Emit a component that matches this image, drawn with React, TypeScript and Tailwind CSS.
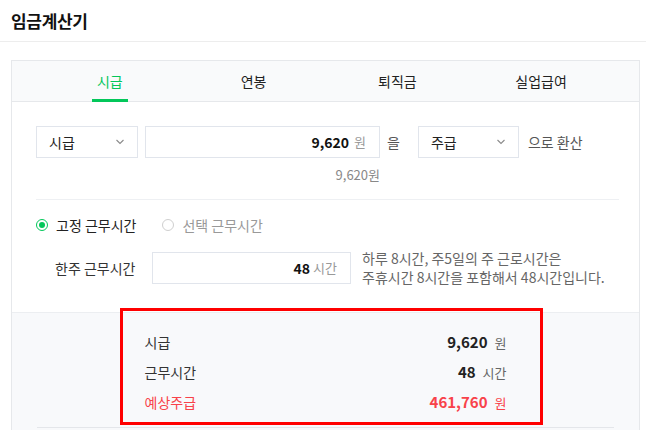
import { ReactNode } from 'react'

function Chevron() {
  return (
    <svg width="10" height="6" viewBox="0 0 10 6" fill="none" className="text-[#8a8a8a]">
      <path d="M1.5 1l3.5 3.5L8.5 1" stroke="currentColor" strokeWidth="1.1" />
    </svg>
  )
}

function Select({ label, className }: { label: string; className: string }) {
  return (
    <div
      className={`flex h-[32px] items-center justify-between border border-[#e1e5ec] bg-white pl-[12px] pr-[12px] text-[14px] text-[#222] ${className}`}
    >
      <span>{label}</span>
      <Chevron />
    </div>
  )
}

function Radio({ checked, children }: { checked?: boolean; children: ReactNode }) {
  return (
    <div className="flex items-center gap-[8px]">
      {checked ? (
        <span className="flex h-[12px] w-[12px] items-center justify-center rounded-full border border-[#03c75a]">
          <span className="h-[6px] w-[6px] rounded-full bg-[#03c75a]" />
        </span>
      ) : (
        <span className="h-[12px] w-[12px] rounded-full border border-[#cfcfcf]" />
      )}
      <span className={checked ? 'text-[#222]' : 'text-[#999]'}>{children}</span>
    </div>
  )
}

function SummaryRow({ label, value, unit, red }: { label: string; value: string; unit: string; red?: boolean }) {
  return (
    <div className="flex h-[30px] items-center justify-between">
      <span className={`text-[14px] ${red ? 'text-[#f8424a]' : 'text-[#333]'}`}>{label}</span>
      <span className="flex items-baseline">
        <span className={`text-[15px] font-bold ${red ? 'text-[#f8424a]' : 'text-[#222]'}`}>{value}</span>
        <span className={`ml-[7px] text-[13px] ${red ? 'text-[#f8424a]' : 'text-[#666]'}`}>{unit}</span>
      </span>
    </div>
  )
}

export default function App() {
  const tabs = ['시급', '연봉', '퇴직금', '실업급여']

  return (
    <div className="h-[430px] w-[646px] overflow-hidden bg-white font-['Noto_Sans_CJK_KR','Noto_Sans',sans-serif] text-[14px] text-[#222]">
      {/* Title */}
      <div className="flex h-[42px] items-center border-b border-[#ededed] pl-[11px]">
        <h1 className="text-[17px] font-bold tracking-[-0.3px] text-[#111]">임금계산기</h1>
      </div>

      {/* Card */}
      <div className="ml-[11px] mr-[6px] mt-[18px] border border-[#e6e8eb]">
        {/* Tabs */}
        <div className="grid h-[41px] grid-cols-4 border-b border-[#e6e8eb] bg-[#f9fafb] px-[26px]">
          {tabs.map((t, i) => (
            <div key={t} className="flex items-center justify-center">
              <div className="relative flex h-full items-center px-[5px]">
                <span className={i === 0 ? 'text-[14px] text-[#03c75a]' : 'text-[14px] text-[#222]'}>{t}</span>
                {i === 0 && <span className="absolute bottom-[-1px] left-0 right-0 h-[3px] bg-[#03c75a]" />}
              </div>
            </div>
          ))}
        </div>

        {/* Converter */}
        <div className="pl-[24px] pr-[20px] pt-[24px]">
          <div className="flex items-center">
            <Select label="시급" className="w-[102px]" />
            <div className="ml-[7px] flex h-[32px] w-[235px] items-center justify-end border border-[#e1e5ec] pr-[13px]">
              <span className="text-[14px] font-bold text-[#111]">9,620</span>
              <span className="ml-[5px] text-[13px] text-[#999]">원</span>
            </div>
            <span className="ml-[7px] text-[14px] text-[#555]">을</span>
            <Select label="주급" className="ml-[18px] w-[101px]" />
            <span className="ml-[9px] text-[14px] text-[#555]">으로 환산</span>
          </div>
          <div className="mt-[8px] flex w-[344px] justify-end text-[13px] leading-[18px] text-[#888]">9,620원</div>

          <div className="mt-[15px] h-px bg-[#eef0f3]" />

          <div className="mt-[15px] flex items-center gap-[26px] leading-[20px]">
            <Radio checked>고정 근무시간</Radio>
            <Radio>선택 근무시간</Radio>
          </div>

          <div className="mt-[14px] flex items-center pb-[25px]">
            <span className="ml-[19px] w-[97px] text-[#333]">한주 근무시간</span>
            <div className="flex h-[32px] w-[199px] items-center justify-end border border-[#e1e5ec] pr-[13px]">
              <span className="text-[14px] font-bold text-[#111]">48</span>
              <span className="ml-[3px] text-[13px] text-[#999]">시간</span>
            </div>
            <p className="ml-[11px] text-[14px] leading-[19px] text-[#666]">
              하루 8시간, 주5일의 주 근로시간은
              <br />
              주휴시간 8시간을 포함해서 48시간입니다.
            </p>
          </div>
        </div>

        {/* Result */}
        <div className="relative border-t border-[#eceef1] bg-[#f8f9fb] pb-[11px] pt-[14px]">
          <div className="mx-auto w-[362px]">
            <SummaryRow label="시급" value="9,620" unit="원" />
            <SummaryRow label="근무시간" value="48" unit="시간" />
            <SummaryRow label="예상주급" value="461,760" unit="원" red />
          </div>
          <div className="mx-[25px] mt-[10px] h-px bg-[#e4e6ea]" />
          <div className="absolute left-[108px] top-[-5px] h-[117px] w-[423px] border-[3px] border-[#ff0000]" />
        </div>
      </div>
    </div>
  )
}
